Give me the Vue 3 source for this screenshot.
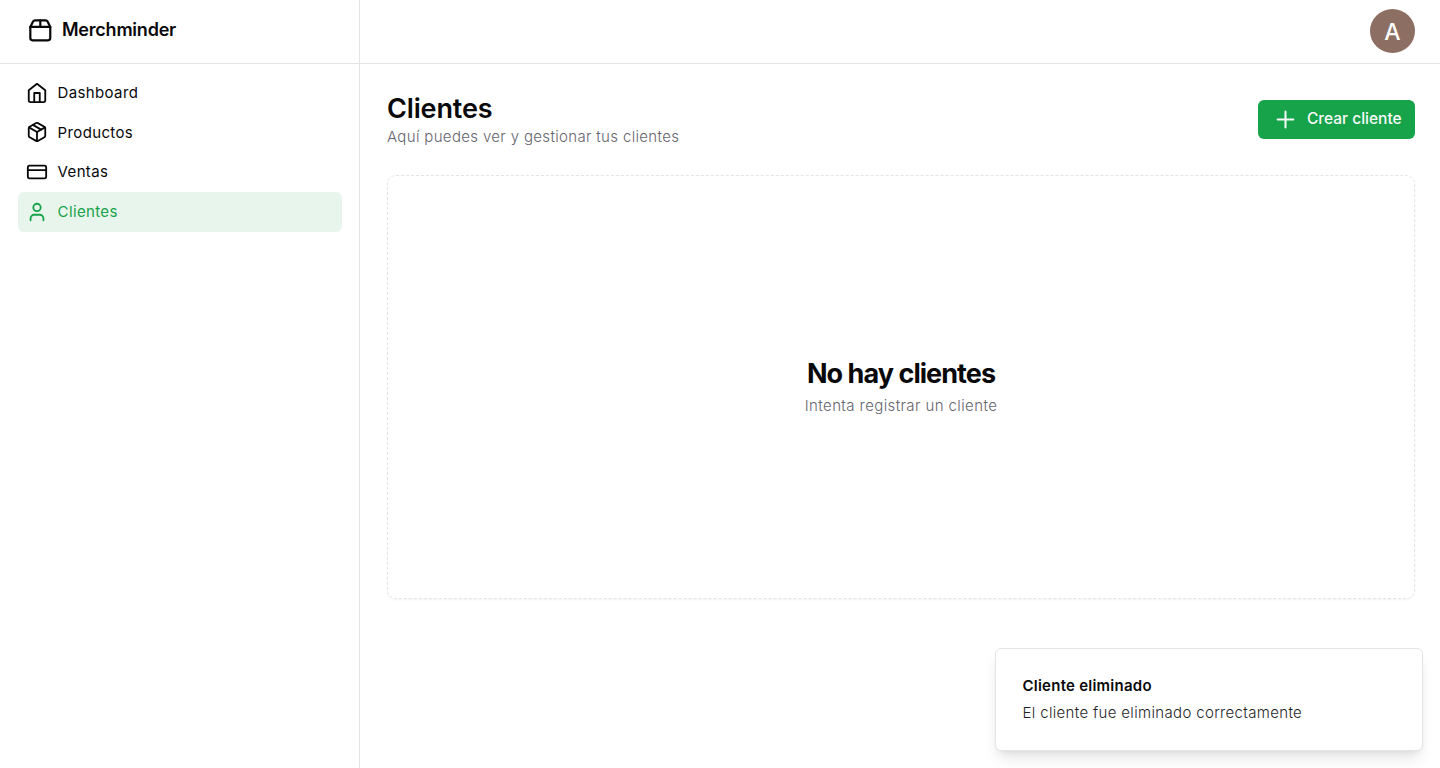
<script setup>
const nav = [
  {
    label: 'Dashboard',
    paths: ['m3 9 9-7 9 7v11a2 2 0 0 1-2 2H5a2 2 0 0 1-2-2z', 'M9 22V12h6v10'],
  },
  {
    label: 'Productos',
    paths: [
      'm7.5 4.27 9 5.15',
      'M21 8a2 2 0 0 0-1-1.73l-7-4a2 2 0 0 0-2 0l-7 4A2 2 0 0 0 3 8v8a2 2 0 0 0 1 1.73l7 4a2 2 0 0 0 2 0l7-4A2 2 0 0 0 21 16Z',
      'm3.3 7 8.7 5 8.7-5',
      'M12 22V12',
    ],
  },
  {
    label: 'Ventas',
    paths: ['M4 5h16a2 2 0 0 1 2 2v10a2 2 0 0 1-2 2H4a2 2 0 0 1-2-2V7a2 2 0 0 1 2-2z', 'M2 10h20'],
  },
  {
    label: 'Clientes',
    active: true,
    paths: ['M19 21v-2a4 4 0 0 0-4-4H9a4 4 0 0 0-4 4v2', 'M16 7a4 4 0 1 1-8 0a4 4 0 0 1 8 0'],
  },
]
</script>

<template>
  <div class="app">
    <aside class="sidebar">
      <div class="brand">
        <svg class="icon logo" viewBox="0 0 24 24">
          <path d="M3 9h18v10a2 2 0 0 1-2 2H5a2 2 0 0 1-2-2V9Z" />
          <path d="m3 9 2.45-4.9A2 2 0 0 1 7.24 3h9.52a2 2 0 0 1 1.8 1.1L21 9" />
          <path d="M12 3v6" />
        </svg>
        <span>Merchminder</span>
      </div>
      <nav class="nav">
        <a v-for="item in nav" :key="item.label" class="link" :class="{ active: item.active }">
          <svg class="icon" viewBox="0 0 24 24">
            <path v-for="d in item.paths" :key="d" :d="d" />
          </svg>
          <span>{{ item.label }}</span>
        </a>
      </nav>
    </aside>
    <div class="content">
      <header class="topbar">
        <div class="avatar">A</div>
      </header>
      <main class="main">
        <div class="heading">
          <div>
            <h1>Clientes</h1>
            <p class="muted">Aquí puedes ver y gestionar tus clientes</p>
          </div>
          <button class="create">
            <svg class="icon plus" viewBox="0 0 24 24"><path d="M5 12h14M12 5v14" /></svg>
            <span>Crear cliente</span>
          </button>
        </div>
        <section class="empty">
          <h2>No hay clientes</h2>
          <p class="muted">Intenta registrar un cliente</p>
        </section>
      </main>
    </div>
    <div class="toast">
      <strong>Cliente eliminado</strong>
      <p>El cliente fue eliminado correctamente</p>
    </div>
  </div>
</template>

<style>
body {
  margin: 0;
  background: #fff;
  overflow: hidden;
}
</style>

<style scoped>
.app {
  display: grid;
  grid-template-columns: 360px 1fr;
  height: 768px;
  box-sizing: border-box;
  font-family: Inter, sans-serif;
  font-size: 15px;
  color: #09090b;
}
h1, h2, p { margin: 0; }
.icon {
  display: block;
  width: 22px;
  height: 22px;
  flex: none;
  fill: none;
  stroke: currentColor;
  stroke-width: 2;
  stroke-linecap: round;
  stroke-linejoin: round;
}
.sidebar {
  box-sizing: border-box;
  border-right: 1px solid #e4e4e7;
}
.brand {
  box-sizing: border-box;
  height: 64px;
  padding: 0 27px 4px 26.6px;
  border-bottom: 1px solid #e4e4e7;
  display: flex;
  align-items: center;
  gap: 8.8px;
  font-size: 18px;
  font-weight: 600;
  letter-spacing: -0.22px;
}
.logo { width: 26.6px; height: 26.6px; margin-top: 1px; }
.nav {
  display: grid;
  grid-auto-rows: 39.63px;
  padding: 9px 17px 0 18px;
}
.link {
  display: flex;
  align-items: center;
  gap: 9.6px;
  padding: 0 8px;
  border-radius: 6px;
  letter-spacing: 0.36px;
}
.link span { padding-bottom: 0.25px; }
.link.active {
  color: #16a34a;
  background: #e8f5ec;
}
.content {
  display: flex;
  flex-direction: column;
}
.topbar {
  box-sizing: border-box;
  height: 64px;
  padding: 9px 25px 0;
  border-bottom: 1px solid #e4e4e7;
  display: flex;
  justify-content: flex-end;
}
.avatar {
  width: 45px;
  height: 44px;
  border-radius: 50%;
  background: #8d6e63;
  color: #fff;
  font-size: 23px;
  font-weight: 500;
  line-height: 46px;
  text-align: center;
}
.main { padding: 27px 25px 0 27px; }
.heading {
  display: flex;
  justify-content: space-between;
  align-items: flex-start;
  height: 84px;
}
h1 {
  font-size: 27px;
  line-height: 36px;
  font-weight: 600;
  letter-spacing: -0.15px;
}
.muted {
  color: #65656e;
  line-height: 20px;
  font-weight: 300;
  letter-spacing: 0.34px;
}
.create {
  box-sizing: border-box;
  display: flex;
  align-items: center;
  gap: 8px;
  width: 157px;
  height: 39px;
  margin-top: 9px;
  padding: 0 14px;
  border: 0;
  border-radius: 6px;
  background: #16a34a;
  color: #fafafa;
  font: 500 15.5px Inter, sans-serif;
  white-space: nowrap;
}
.create span { padding-bottom: 2px; }
.plus { width: 27px; height: 27px; stroke-width: 1.8; }
.empty {
  box-sizing: border-box;
  height: 424px;
  padding-bottom: 3px;
  border: 1px dashed #e4e4e7;
  border-radius: 9px;
  box-shadow: 0 1px 2px rgba(0, 0, 0, 0.05);
  display: flex;
  flex-direction: column;
  align-items: center;
  justify-content: center;
}
h2 {
  font-size: 27px;
  line-height: 36px;
  font-weight: 700;
  letter-spacing: -0.95px;
}
.empty .muted { margin-top: 4px; letter-spacing: 0.4px; }
.toast {
  position: absolute;
  right: 17px;
  bottom: 17px;
  box-sizing: border-box;
  width: 428px;
  height: 103px;
  padding: 27px 26px 0 26.5px;
  border: 1px solid #e4e4e7;
  border-radius: 6px;
  background: #fff;
  box-shadow: 0 10px 15px -3px rgba(0, 0, 0, 0.1), 0 4px 6px -4px rgba(0, 0, 0, 0.1);
}
.toast strong {
  display: block;
  line-height: 20px;
  font-weight: 600;
  letter-spacing: 0.24px;
}
.toast p {
  margin-top: 7px;
  line-height: 20px;
  font-weight: 300;
  letter-spacing: 0.34px;
  opacity: 0.9;
}
</style>
